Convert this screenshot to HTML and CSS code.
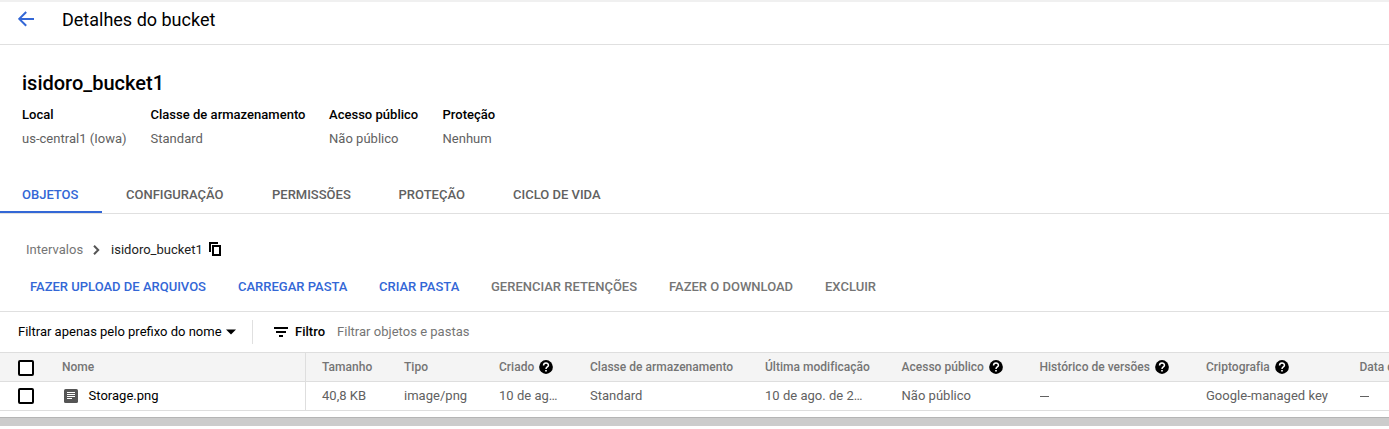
FILE: index.html
```html
<!DOCTYPE html>
<html lang="pt-BR">
<head>
<meta charset="utf-8">
<title>Detalhes do bucket</title>
<link rel="stylesheet" href="styles.css">
</head>
<body>
<svg class="defs" aria-hidden="true">
  <symbol id="help" viewBox="0 0 24 24"><circle cx="12" cy="12" r="11.8"/><path fill="none" stroke="#fff" stroke-width="2.6" d="M7.8 9.6C7.8 3.9 16.2 3.9 16.2 9.1C16.2 12 12 12 12 15.3"/><path fill="#fff" d="M10.6 17h2.8v2.8h-2.8z"/></symbol>
</svg>
<header class="topbar">
  <svg class="back" viewBox="0 0 16 16"><path d="M16 7.9H1.4M8.2 1L1.3 7.9l6.9 6.9"/></svg>
  <h1 class="page-title">Detalhes do bucket</h1>
</header>
<section class="summary">
  <h2 class="bucket-name">isidoro_bucket1</h2>
  <dl class="facts">
    <div class="fact f-local"><dt>Local</dt><dd>us-central1 (Iowa)</dd></div>
    <div class="fact f-class"><dt>Classe de armazenamento</dt><dd>Standard</dd></div>
    <div class="fact f-access"><dt>Acesso público</dt><dd>Não público</dd></div>
    <div class="fact"><dt>Proteção</dt><dd>Nenhum</dd></div>
  </dl>
</section>
<nav class="tabs">
  <a class="tab active">OBJETOS</a><a class="tab t2">CONFIGURAÇÃO</a><a class="tab t3">PERMISSÕES</a><a class="tab t4">PROTEÇÃO</a><a class="tab">CICLO DE VIDA</a>
</nav>
<div class="crumbs">
  <span class="crumb-root">Intervalos</span>
  <svg class="chevron" viewBox="0 0 7 10"><path d="M1 .8L5.2 5 1 9.2"/></svg>
  <span class="crumb-current">isidoro_bucket1</span>
  <svg class="copy" viewBox="0 0 13 15"><path d="M1 10V1h8M4 4h7v9H4z"/></svg>
</div>
<div class="actions">
  <a class="action a1">FAZER UPLOAD DE ARQUIVOS</a><a class="action a2">CARREGAR PASTA</a><a class="action a3">CRIAR PASTA</a><a class="action off a4">GERENCIAR RETENÇÕES</a><a class="action off a5">FAZER O DOWNLOAD</a><a class="action off">EXCLUIR</a>
</div>
<div class="filterbar">
  <span class="prefix">Filtrar apenas pelo prefixo do nome</span>
  <svg class="caret" viewBox="0 0 10 6"><path d="M0 .5h10L5 5.5z"/></svg>
  <span class="divider"></span>
  <svg class="filter-icon" viewBox="0 0 14 10"><path d="M0 1h14M2 5h10M5 9h4"/></svg>
  <span class="filter-label">Filtro</span>
  <span class="filter-hint">Filtrar objetos e pastas</span>
</div>
<div class="table">
  <div class="row head">
    <span class="select"><i class="box"></i></span>
    <span class="name">Nome</span>
    <span class="cell first">Tamanho</span>
    <span class="cell">Tipo</span>
    <span class="cell">Criado<svg class="help"><use href="#help"/></svg></span>
    <span class="cell">Classe de armazenamento</span>
    <span class="cell">Última modificação</span>
    <span class="cell">Acesso público<svg class="help"><use href="#help"/></svg></span>
    <span class="cell">Histórico de versões<svg class="help"><use href="#help"/></svg></span>
    <span class="cell">Criptografia<svg class="help"><use href="#help"/></svg></span>
    <span class="cell">Data de</span>
  </div>
  <div class="row">
    <span class="select"><i class="box"></i></span>
    <span class="name file"><svg class="doc" viewBox="0 0 14 14"><rect width="14" height="14" rx="1.6"/><path d="M3 3.5h8M3 5.5h8M3 7.5h8M3 9.5h5"/></svg>Storage.png</span>
    <span class="cell first">40,8 KB</span>
    <span class="cell">image/png</span>
    <span class="cell">10 de ag…</span>
    <span class="cell">Standard</span>
    <span class="cell">10 de ago. de 2…</span>
    <span class="cell">Não público</span>
    <span class="cell"><i class="dash"></i></span>
    <span class="cell">Google-managed key</span>
    <span class="cell"><i class="dash"></i></span>
  </div>
</div>
<div class="scrollbar"></div>
</body>
</html>
```
FILE: styles.css
```css
* { box-sizing: border-box; }
body { margin: 0; width: 1389px; height: 429px; overflow: hidden; background: #fff; color: #000; font: 13px/20px Roboto, sans-serif; letter-spacing: .02px; white-space: nowrap; }
h1, h2, dl, dd { margin: 0; }
svg { display: block; flex: none; }
.defs { display: none; }
.topbar { height: 45px; display: flex; align-items: flex-start; padding: 8px 0 0 18px; border-top: 2px solid #f0f0f0; border-bottom: 1px solid #e0e0e0; }
.back { width: 16px; height: 16px; margin-top: 1px; fill: none; stroke: #3367d6; stroke-width: 2; }
.page-title { margin-left: 28px; font-size: 18px; font-weight: 400; line-height: 20px; letter-spacing: 0; }
.summary { height: 129px; padding: 26px 22px 0; }
.bucket-name { font-size: 20px; font-weight: 500; line-height: 24px; letter-spacing: 0; }
.facts { display: flex; margin-top: 10px; }
.fact dt { font-weight: 500; }
.fact dd { margin-top: 4px; color: #616161; }
.f-local { width: 128.5px; }
.f-class { width: 178.5px; }
.f-access { width: 113.5px; }
.tabs { display: flex; height: 40px; border-bottom: 1px solid #e0e0e0; }
.tab { height: 40px; padding: 11px 24px 0; color: #616161; font-weight: 500; letter-spacing: 0; }
.tab.active { width: 102px; padding-left: 22px; color: #3367d6; border-bottom: 2px solid #3367d6; height: 39px; }
.t2 { width: 146px; }
.t3 { width: 126.5px; }
.t4 { width: 114.5px; }
.crumbs { display: flex; align-items: center; height: 20px; margin: 26px 0 0 26px; }
.crumb-root { width: 67px; color: #757575; }
.chevron { width: 7px; height: 10px; fill: none; stroke: #555; stroke-width: 2; }
.crumb-current { width: 98px; margin-left: 11px; color: #212121; }
.copy { width: 13px; height: 15px; margin-top: -1px; fill: none; stroke: #000; stroke-width: 2; }
.actions { display: flex; height: 52px; padding: 17px 0 0 30px; border-bottom: 1px solid #e0e0e0; }
.action { color: #3367d6; font-weight: 500; letter-spacing: 0; }
.action.off { color: #757575; }
.a1 { width: 208px; }
.a2 { width: 141px; }
.a3 { width: 112px; }
.a4 { width: 178px; }
.a5 { width: 156px; }
.filterbar { display: flex; align-items: center; height: 40px; padding-left: 18px; }
.prefix { width: 208px; letter-spacing: 0; }
.caret { width: 10px; height: 6px; }
.divider { width: 1px; height: 24px; margin-left: 16px; background: #e0e0e0; }
.filter-icon { width: 14px; height: 10px; margin-left: 21px; fill: none; stroke: #000; stroke-width: 2; }
.filter-label { width: 42px; margin-left: 7px; font-weight: 500; }
.filter-hint { color: #757575; }
.table { border-top: 1px solid #dedede; }
.row { display: grid; grid-template-columns: 62px 243px 99px 95px 91px 175px 136.5px 138px 166.5px 153.5px 60px; height: 29px; border-bottom: 1px solid #dedede; line-height: 28px; }
.head { background: #f4f4f4; color: #757575; font-size: 12px; font-weight: 500; }
.select { display: flex; align-items: center; padding-left: 18px; }
.box { width: 16px; height: 16px; border: 2px solid #000; border-radius: 2px; background: #fff; }
.head .box { margin-top: 2px; }
.cell { display: flex; align-items: center; color: #616161; }
.head .cell { color: #757575; }
.first { border-left: 1px solid #dedede; padding-left: 16px; }
.file { display: flex; align-items: center; }
.doc { width: 14px; height: 14px; margin: 0 10.5px 0 2px; fill: #555; }
.doc path { fill: none; stroke: #fff; stroke-width: 1; }
.help { width: 14px; height: 14px; margin-left: 5px; fill: #000; }
.dash { width: 9px; height: 1px; margin-left: .5px; background: #616161; }
.scrollbar { height: 9px; margin-top: 6px; background: #ccc; border-top: 1px solid #b5b5b5; }
```
